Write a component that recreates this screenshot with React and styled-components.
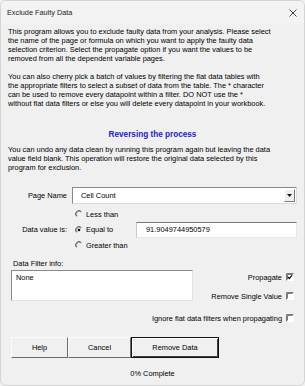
import React from 'react'
import styled, { createGlobalStyle } from 'styled-components'

const GlobalStyle = createGlobalStyle`
  html, body {
    margin: 0;
    padding: 0;
    background: #f0f0f0;
  }
`
const Window = styled.div`
  width: 305px;
  height: 386px;
  box-sizing: border-box;
  background: #f0f0f0;
  border: 1px solid #d4d4d4;
  border-radius: 6px;
  font-family: 'Liberation Sans', Arial, sans-serif;
  font-size: 7.42px;
  color: #000;
  display: flex;
  flex-direction: column;
  overflow: hidden;
`
const TitleBar = styled.div`
  height: 23px;
  flex: none;
  display: flex;
  align-items: center;
  justify-content: space-between;
  padding: 0 7px 0 6px;
  background: #f3f3f3;
  font-size: 7.3px;
  color: #1b1b1b;
`
const Body = styled.div`
  padding: 3px 7px 0 7px;
  display: flex;
  flex-direction: column;
`
const Para = styled.p`
  margin: ${(p) => p.top || 0}px 0 0 0;
  line-height: 9px;
  white-space: pre-line;
`
const Heading = styled.div`
  margin-top: 22px;
  height: 10px;
  line-height: 10px;
  text-align: center;
  font-weight: 700;
  font-size: 8.2px;
  color: #2121d6;
`
const FieldRow = styled.div`
  display: flex;
  align-items: center;
  margin-top: ${(p) => p.top || 0}px;
`
const Label = styled.div`
  width: 59px;
  flex: none;
  text-align: right;
  line-height: 9px;
`
const Combo = styled.div`
  margin-left: 5px;
  flex: 1;
  height: 17px;
  box-sizing: border-box;
  display: flex;
  background: #fff;
  border-top: 1px solid #8a8a8a;
  border-left: 1px solid #8a8a8a;
  border-right: 1px solid #dcdcdc;
  border-bottom: 1px solid #dcdcdc;
`
const ComboText = styled.div`
  flex: 1;
  padding-left: 8px;
  line-height: 15px;
`
const ComboButton = styled.div`
  width: 11px;
  margin: 1px;
  box-sizing: border-box;
  background: #f0f0f0;
  border-left: 1px solid #fff;
  border-top: 1px solid #fff;
  border-right: 1px solid #7a7a7a;
  border-bottom: 1px solid #7a7a7a;
  display: flex;
  align-items: center;
  justify-content: center;
`
const RadioGroup = styled.div`
  margin-left: 8px;
  width: 61px;
  flex: none;
  display: flex;
  flex-direction: column;
`
const RadioRow = styled.div`
  height: 15.5px;
  display: flex;
  align-items: center;
  gap: 3px;
`
const ValueBox = styled.div`
  flex: 1;
  height: 16px;
  box-sizing: border-box;
  background: #fff;
  border-top: 1px solid #7a7a7a;
  border-left: 1px solid #c8c8c8;
  border-right: 1px solid #e6e6e6;
  border-bottom: 1px solid #e6e6e6;
  padding-left: 9px;
  line-height: 14px;
`
const FilterLabel = styled.div`
  margin: 5.5px 0 0 5px;
  line-height: 9px;
`
const FilterSection = styled.div`
  margin-top: 2.5px;
  padding: 0 3px 0 3px;
  display: flex;
  justify-content: space-between;
`
const TextArea = styled.div`
  width: 182px;
  height: 31px;
  box-sizing: border-box;
  background: #fff;
  border-top: 1px solid #8a8a8a;
  border-left: 1px solid #8a8a8a;
  border-right: 1px solid #e3e3e3;
  border-bottom: 1px solid #e3e3e3;
  padding: 2px 4px;
  line-height: 9px;
`
const CheckColumn = styled.div`
  padding-top: 2px;
  display: flex;
  flex-direction: column;
  align-items: flex-end;
  gap: 9px;
`
const CheckRow = styled.div`
  height: 10px;
  display: flex;
  align-items: center;
  justify-content: flex-end;
  gap: 4px;
  margin-top: ${(p) => p.top || 0}px;
  padding-right: ${(p) => p.pad || 0}px;
`
const ButtonRow = styled.div`
  margin-top: 14px;
  padding-left: 3px;
  display: flex;
`
const Button = styled.div`
  width: ${(p) => p.w}px;
  height: 21px;
  box-sizing: border-box;
  display: flex;
  align-items: center;
  justify-content: center;
  background: #f0f0f0;
  border-top: 1px solid #fbfbfb;
  border-left: 1px solid #fbfbfb;
  border-right: 1px solid #6b6b6b;
  border-bottom: 1px solid #6b6b6b;
  ${(p) =>
    p.isDefault &&
    `
    border: 1px solid #111;
    box-shadow: inset 1px 1px 0 #fff, inset -1px -1px 0 #404040;
  `}
`
const Status = styled.div`
  margin-top: 10.5px;
  text-align: center;
  line-height: 9px;
`

const Radio = ({ checked }) => (
  <svg width="8" height="8" viewBox="0 0 8 8">
    <path d="M6.5 1.5 A3.5 3.5 0 0 0 1.5 6.5" fill="none" stroke="#7a7a7a" strokeWidth="1" />
    <path d="M6 2 A2.8 2.8 0 0 0 2 6" fill="none" stroke="#404040" strokeWidth="0.6" />
    {checked && <circle cx="4" cy="4" r="1.3" fill="#111" />}
  </svg>
)

const Checkbox = ({ checked }) => (
  <svg width="8" height="8" viewBox="0 0 8 8">
    <rect x="0" y="0" width="8" height="8" fill="#fff" />
    <path d="M0.5 7.5 V0.5 H7.5" fill="none" stroke="#7a7a7a" strokeWidth="1" />
    <path d="M1.5 6.5 V1.5 H6.5" fill="none" stroke="#404040" strokeWidth="0.7" />
    {checked && (
      <path d="M2 4 L3.3 5.5 L6.2 2.2" fill="none" stroke="#111" strokeWidth="1.2" />
    )}
  </svg>
)

const App = () => {
  return (
    <>
      <GlobalStyle />
      <Window>
        <TitleBar>
          <span>Exclude Faulty Data</span>
          <svg width="8" height="8" viewBox="0 0 8 8">
            <path d="M0.5 0.5 L7.5 7.5 M7.5 0.5 L0.5 7.5" stroke="#333" strokeWidth="0.9" />
          </svg>
        </TitleBar>
        <Body>
          <Para>
            {`This program allows you to exclude faulty data from your analysis. Please select
the name of the page or formula on which you want to apply the faulty data
selection criterion. Select the propagate option if you want the values to be
removed from all the dependent variable pages.`}
          </Para>
          <Para top={9}>
            {`You can also cherry pick a batch of values by filtering the flat data tables with
the appropriate filters to select a subset of data from the table. The * character
can be used to remove every datapoint within a filter. DO NOT use the *
without flat data filters or else you will delete every datapoint in your workbook.`}
          </Para>
          <Heading>Reversing the process</Heading>
          <Para top={4.5}>
            {`You can undo any data clean by running this program again but leaving the data
value field blank. This operation will restore the original data selected by this
program for exclusion.`}
          </Para>
          <FieldRow top={15.5}>
            <Label>Page Name</Label>
            <Combo>
              <ComboText>Cell Count</ComboText>
              <ComboButton>
                <svg width="5" height="3" viewBox="0 0 5 3">
                  <path d="M0 0 H5 L2.5 3 Z" fill="#111" />
                </svg>
              </ComboButton>
            </Combo>
          </FieldRow>
          <FieldRow top={2.5}>
            <Label>Data value is:</Label>
            <RadioGroup>
              <RadioRow>
                <Radio />
                <span>Less than</span>
              </RadioRow>
              <RadioRow>
                <Radio checked />
                <span>Equal to</span>
              </RadioRow>
              <RadioRow>
                <Radio />
                <span>Greater than</span>
              </RadioRow>
            </RadioGroup>
            <ValueBox>91.9049744950579</ValueBox>
          </FieldRow>
          <FilterLabel>Data Filter info:</FilterLabel>
          <FilterSection>
            <TextArea>None</TextArea>
            <CheckColumn>
              <CheckRow>
                <span>Propagate</span>
                <Checkbox checked />
              </CheckRow>
              <CheckRow>
                <span>Remove Single Value</span>
                <Checkbox />
              </CheckRow>
            </CheckColumn>
          </FilterSection>
          <CheckRow top={12} pad={3}>
            <span>Ignore flat data filters when propagating</span>
            <Checkbox />
          </CheckRow>
          <ButtonRow>
            <Button w={57}>Help</Button>
            <Button w={63}>Cancel</Button>
            <Button w={88} isDefault>
              Remove Data
            </Button>
          </ButtonRow>
          <Status>0% Complete</Status>
        </Body>
      </Window>
    </>
  )
}
export default App
